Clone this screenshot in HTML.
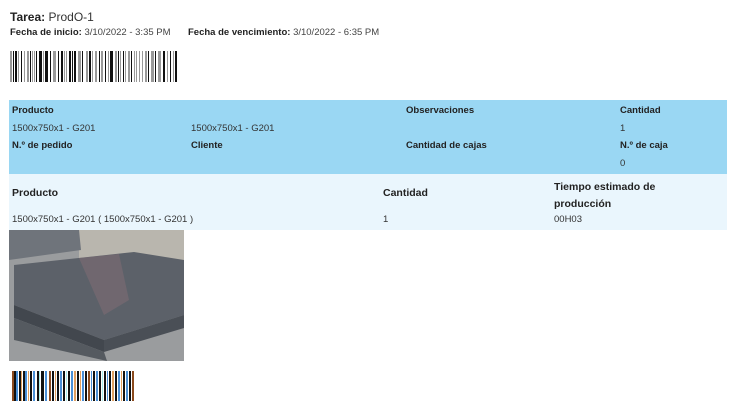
<!DOCTYPE html>
<html><head><meta charset="utf-8"><style>
body{margin:0;width:742px;height:405px;background:#fff;font-family:"Liberation Sans",sans-serif;color:#222;position:relative;overflow:hidden}
.a{position:absolute;white-space:nowrap}
.b{font-weight:bold}
.s{font-size:9.5px}
</style></head><body>
<div class="a" style="left:10px;top:10px;font-size:12px"><span class="b">Tarea:</span> <span style="color:#333">ProdO-1</span></div>
<div class="a s" style="left:10px;top:27px"><span class="b">Fecha de inicio:</span> <span style="color:#444">3/10/2022 - 3:35 PM</span></div>
<div class="a s" style="left:188px;top:27px"><span class="b">Fecha de vencimiento:</span> <span style="color:#444">3/10/2022 - 6:35 PM</span></div>
<svg class="a" style="left:10px;top:51px" width="167" height="31">
<g fill="#111">
<rect x="0" width="2" height="31" fill="#999"/><rect x="3" width="1" height="31"/><rect x="5" width="2" height="31"/><rect x="8" width="1" height="31" fill="#999"/><rect x="11" width="1" height="31"/><rect x="14" width="1" height="31" fill="#999"/><rect x="17" width="2" height="31" fill="#999"/><rect x="20" width="1" height="31"/><rect x="22" width="1" height="31" fill="#999"/><rect x="24" width="1" height="31" fill="#999"/><rect x="26" width="1" height="31"/><rect x="29" width="3" height="31"/><rect x="33" width="1" height="31" fill="#999"/><rect x="35" width="3" height="31"/><rect x="40" width="1" height="31"/><rect x="43" width="3" height="31" fill="#999"/><rect x="48" width="1" height="31"/><rect x="51" width="2" height="31"/><rect x="54" width="1" height="31" fill="#999"/><rect x="56" width="1" height="31" fill="#999"/><rect x="59" width="2" height="31"/><rect x="62" width="1" height="31"/><rect x="64" width="2" height="31"/><rect x="68" width="3" height="31" fill="#999"/><rect x="72" width="1" height="31"/><rect x="76" width="2" height="31" fill="#999"/><rect x="79" width="2" height="31"/><rect x="82" width="1" height="31" fill="#999"/><rect x="85" width="2" height="31" fill="#999"/><rect x="89" width="1" height="31"/><rect x="91" width="2" height="31" fill="#999"/><rect x="95" width="1" height="31"/><rect x="98" width="1" height="31" fill="#999"/><rect x="100" width="3" height="31"/><rect x="105" width="2" height="31" fill="#999"/><rect x="108" width="1" height="31"/><rect x="110" width="1" height="31" fill="#999"/><rect x="113" width="1" height="31"/><rect x="115" width="1" height="31" fill="#999"/><rect x="118" width="2" height="31" fill="#999"/><rect x="121" width="1" height="31"/><rect x="124" width="1" height="31" fill="#999"/><rect x="126" width="1" height="31" fill="#999"/><rect x="129" width="1" height="31" fill="#999"/><rect x="132" width="1" height="31" fill="#999"/><rect x="135" width="2" height="31" fill="#999"/><rect x="138" width="1" height="31"/><rect x="141" width="3" height="31" fill="#999"/><rect x="145" width="1" height="31"/><rect x="148" width="3" height="31" fill="#999"/><rect x="153" width="2" height="31"/><rect x="157" width="1" height="31" fill="#999"/><rect x="160" width="1" height="31"/><rect x="163" width="1" height="31" fill="#999"/><rect x="165" width="2" height="31"/>
</g></svg>
<div class="a" style="left:9px;top:100px;width:718px;height:74px;background:#9ad7f3"></div>
<div class="a" style="left:9px;top:174px;width:718px;height:56px;background:#eaf6fd"></div>
<div class="a s b" style="left:12px;top:105px">Producto</div>
<div class="a s b" style="left:406px;top:105px">Observaciones</div>
<div class="a s b" style="left:620px;top:105px">Cantidad</div>
<div class="a s" style="left:12px;top:123px;color:#333">1500x750x1 - G201</div>
<div class="a s" style="left:191px;top:123px;color:#333">1500x750x1 - G201</div>
<div class="a s" style="left:620px;top:123px;color:#333">1</div>
<div class="a s b" style="left:12px;top:140px">N.º de pedido</div>
<div class="a s b" style="left:191px;top:140px">Cliente</div>
<div class="a s b" style="left:406px;top:140px">Cantidad de cajas</div>
<div class="a s b" style="left:620px;top:140px">N.º de caja</div>
<div class="a s" style="left:620px;top:158px;color:#333">0</div>
<div class="a b" style="left:12px;top:187px;font-size:10.5px">Producto</div>
<div class="a b" style="left:383px;top:187px;font-size:10.5px">Cantidad</div>
<div class="a b" style="left:554px;top:179px;font-size:10.5px;line-height:17px">Tiempo estimado de<br>producción</div>
<div class="a s" style="left:12px;top:214px;color:#333">1500x750x1 - G201 ( 1500x750x1 - G201 )</div>
<div class="a s" style="left:383px;top:214px;color:#333">1</div>
<div class="a s" style="left:554px;top:214px;color:#333">00H03</div>
<svg class="a" style="left:9px;top:230px" width="175" height="131">
<rect width="175" height="131" fill="#9a9c9e"/>
<rect x="70" width="105" height="40" fill="#b9b6ae"/>
<polygon points="0,0 70,0 72,20 0,30" fill="#6f747b"/>
<polygon points="5,35 125,22 175,30 175,85 95,110 5,75" fill="#5c6169"/>
<polygon points="70,28 110,24 120,70 95,85" fill="#8a6f78" opacity=".45"/>
<polygon points="5,75 95,110 95,122 5,88" fill="#42474e"/>
<polygon points="95,110 175,85 175,98 95,122" fill="#4a4f56"/>
<polygon points="5,88 95,122 98,131 5,110" fill="#555a60"/>
</svg>
<svg class="a" style="left:12px;top:371px" width="123" height="30">
<g>
<rect x="0" width="2" height="30" fill="#8b4a1e"/><rect x="2" width="2" height="30" fill="#111"/><rect x="4" width="2" height="30" fill="#4a8fd6"/><rect x="7" width="2" height="30" fill="#111"/><rect x="9" width="1" height="30" fill="#e0a060"/><rect x="11" width="2" height="30" fill="#111"/><rect x="13" width="2" height="30" fill="#4a8fd6"/><rect x="16" width="1" height="30" fill="#e0a060"/><rect x="18" width="2" height="30" fill="#111"/><rect x="21" width="2" height="30" fill="#4a8fd6"/><rect x="25" width="2" height="30" fill="#111"/><rect x="27" width="1" height="30" fill="#aee"/><rect x="29" width="3" height="30" fill="#111"/><rect x="33" width="2" height="30" fill="#4a8fd6"/><rect x="37" width="2" height="30" fill="#8b4a1e"/><rect x="40" width="2" height="30" fill="#111"/><rect x="43" width="1" height="30" fill="#e0a060"/><rect x="45" width="2" height="30" fill="#111"/><rect x="48" width="2" height="30" fill="#4a8fd6"/><rect x="51" width="2" height="30" fill="#111"/><rect x="54" width="1" height="30" fill="#aee"/><rect x="56" width="2" height="30" fill="#111"/><rect x="59" width="2" height="30" fill="#4a8fd6"/><rect x="62" width="2" height="30" fill="#e0a060"/><rect x="65" width="2" height="30" fill="#111"/><rect x="68" width="1" height="30" fill="#e0a060"/><rect x="70" width="2" height="30" fill="#4a8fd6"/><rect x="73" width="2" height="30" fill="#111"/><rect x="76" width="2" height="30" fill="#8b4a1e"/><rect x="79" width="1" height="30" fill="#4a8fd6"/><rect x="81" width="2" height="30" fill="#111"/><rect x="84" width="2" height="30" fill="#4a8fd6"/><rect x="87" width="2" height="30" fill="#111"/><rect x="90" width="1" height="30" fill="#aee"/><rect x="92" width="2" height="30" fill="#111"/><rect x="95" width="1" height="30" fill="#4a8fd6"/><rect x="97" width="2" height="30" fill="#111"/><rect x="100" width="2" height="30" fill="#e0a060"/><rect x="103" width="2" height="30" fill="#111"/><rect x="106" width="2" height="30" fill="#4a8fd6"/><rect x="109" width="1" height="30" fill="#e0a060"/><rect x="111" width="2" height="30" fill="#111"/><rect x="114" width="2" height="30" fill="#4a8fd6"/><rect x="117" width="2" height="30" fill="#111"/><rect x="120" width="2" height="30" fill="#8b4a1e"/>
</g></svg>
</body></html>
